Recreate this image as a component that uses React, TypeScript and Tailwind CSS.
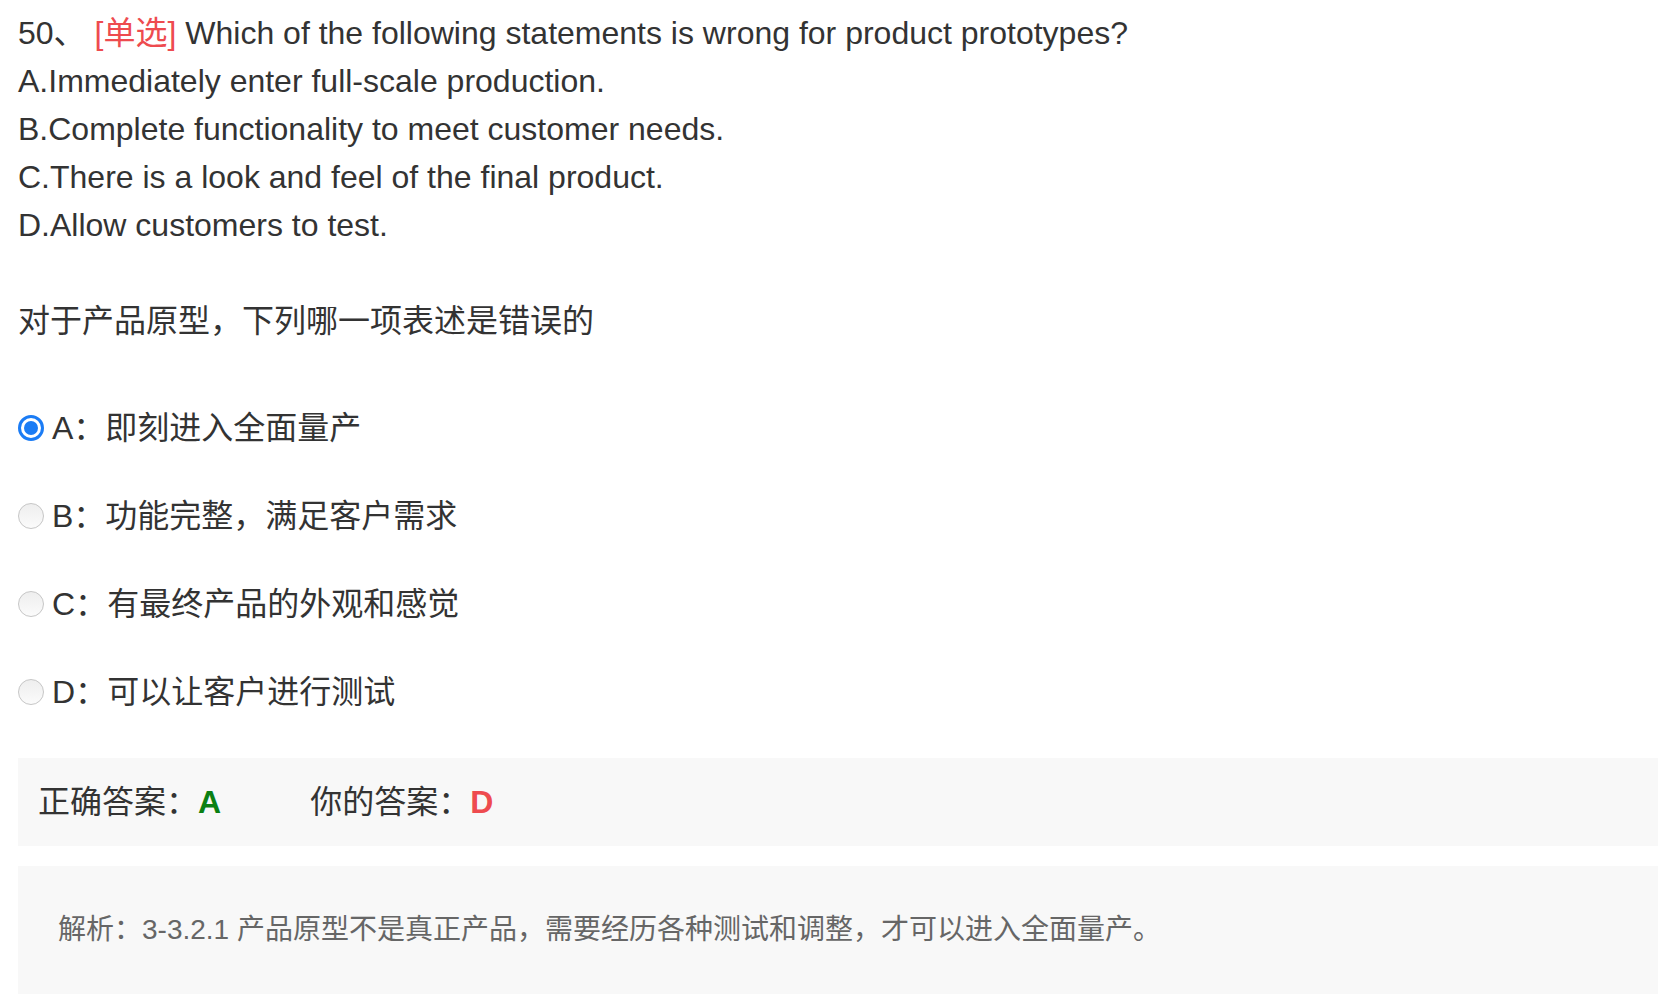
import React from 'react';

const options = [
  { key: 'A', text: '即刻进入全面量产', checked: true },
  { key: 'B', text: '功能完整，满足客户需求', checked: false },
  { key: 'C', text: '有最终产品的外观和感觉', checked: false },
  { key: 'D', text: '可以让客户进行测试', checked: false },
];

function Radio({ checked }: { checked: boolean }) {
  if (checked) {
    return (
      <span className="flex h-[26px] w-[26px] shrink-0 items-center justify-center rounded-full border-[3px] border-[#1b7cf5] bg-white">
        <span className="h-[14px] w-[14px] rounded-full bg-[#1b7cf5]" />
      </span>
    );
  }
  return (
    <span className="h-[26px] w-[26px] shrink-0 rounded-full border-[1.5px] border-[#c6c6c6] bg-gradient-to-b from-[#eeeeee] to-[#fbfbfb]" />
  );
}

export default function App() {
  return (
    <div
      className="min-h-screen bg-white pl-[18px] pr-[6px] pt-[9px] text-[32px] leading-[48px] text-[#333]"
      style={{ fontFamily: '"Liberation Sans", Arial, "Noto Sans CJK SC", sans-serif' }}
    >
      <div>
        <p>
          50、<span className="ml-[9px] text-[#ee4b4f]">[单选]</span> Which of the following statements is wrong for product prototypes?
        </p>
        <p>A.Immediately enter full-scale production.</p>
        <p>B.Complete functionality to meet customer needs.</p>
        <p>C.There is a look and feel of the final product.</p>
        <p>D.Allow customers to test.</p>
        <p className="mt-[48px]">对于产品原型，下列哪一项表述是错误的</p>
      </div>

      <div className="mt-[59px] flex flex-col gap-[40px]">
        {options.map((o) => (
          <label key={o.key} className="flex h-[48px] items-center">
            <Radio checked={o.checked} />
            <span className="ml-[8px]">
              {o.key}：{o.text}
            </span>
          </label>
        ))}
      </div>

      <div className="mt-[42px] flex h-[88px] items-center bg-[#f8f8f8] pl-[20px]">
        <span>正确答案：</span>
        <span className="font-bold text-[#0b8013]">A</span>
        <span className="ml-[89px]">你的答案：</span>
        <span className="font-bold text-[#ee4b4f]">D</span>
      </div>

      <div className="mt-[20px] flex h-[128px] items-center bg-[#f8f8f8] pl-[40px] text-[28px] text-[#666]">
        解析：3-3.2.1 产品原型不是真正产品，需要经历各种测试和调整，才可以进入全面量产。
      </div>
    </div>
  );
}
